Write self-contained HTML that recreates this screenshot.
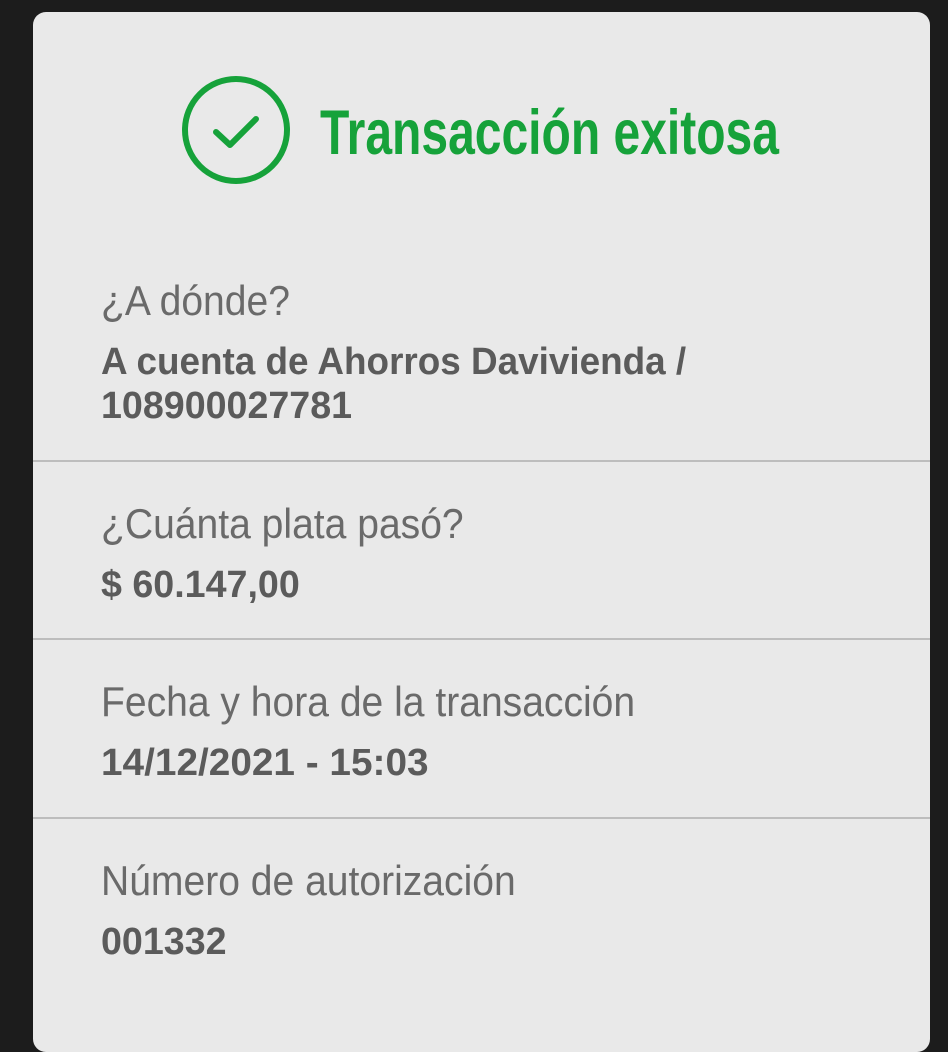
<!DOCTYPE html>
<html><head><meta charset="utf-8"><style>
html,body{margin:0;padding:0;}
body{width:948px;height:1017px;background:#1c1c1c;position:relative;overflow:hidden;font-family:"Liberation Sans",sans-serif;}
.card{position:absolute;left:33px;top:12px;width:897px;height:1040px;background:#e9e9e9;border-radius:13px;}
.t{position:absolute;white-space:nowrap;transform-origin:0 0;line-height:1;}
.title{left:320px;top:102px;font-size:63px;color:#16a23a;font-weight:bold;transform:scaleX(0.762);}
.lab{font-size:42px;color:#6a6a6a;left:101px;transform:scaleX(0.93);}
.val{font-size:38px;color:#5b5b5b;font-weight:bold;left:101px;transform:scaleX(0.99);}
.hr{position:absolute;left:33px;width:897px;height:2px;background:#bdbdbd;}
</style></head><body>
<div class="card"></div>
<svg style="position:absolute;left:180px;top:74px" width="114" height="114" viewBox="0 0 114 114">
<circle cx="56" cy="56" r="51" fill="none" stroke="#16a23a" stroke-width="6"/>
<path d="M36 58 L50 71 L76 45" fill="none" stroke="#16a23a" stroke-width="6" stroke-linecap="round" stroke-linejoin="round"/>
</svg>
<div class="t title">Transacción exitosa</div>
<div class="t lab" style="top:280px">¿A dónde?</div>
<div class="t val" style="top:343px;transform:scaleX(0.97)">A cuenta de Ahorros Davivienda /</div>
<div class="t val" style="top:387px">108900027781</div>
<div class="hr" style="top:460px"></div>
<div class="t lab" style="top:503px">¿Cuánta plata pasó?</div>
<div class="t val" style="top:566px">$ 60.147,00</div>
<div class="hr" style="top:638px"></div>
<div class="t lab" style="top:681px">Fecha y hora de la transacción</div>
<div class="t val" style="top:744px;transform:scaleX(1.02)">14/12/2021 - 15:03</div>
<div class="hr" style="top:817px"></div>
<div class="t lab" style="top:860px">Número de autorización</div>
<div class="t val" style="top:923px">001332</div>
</body></html>
